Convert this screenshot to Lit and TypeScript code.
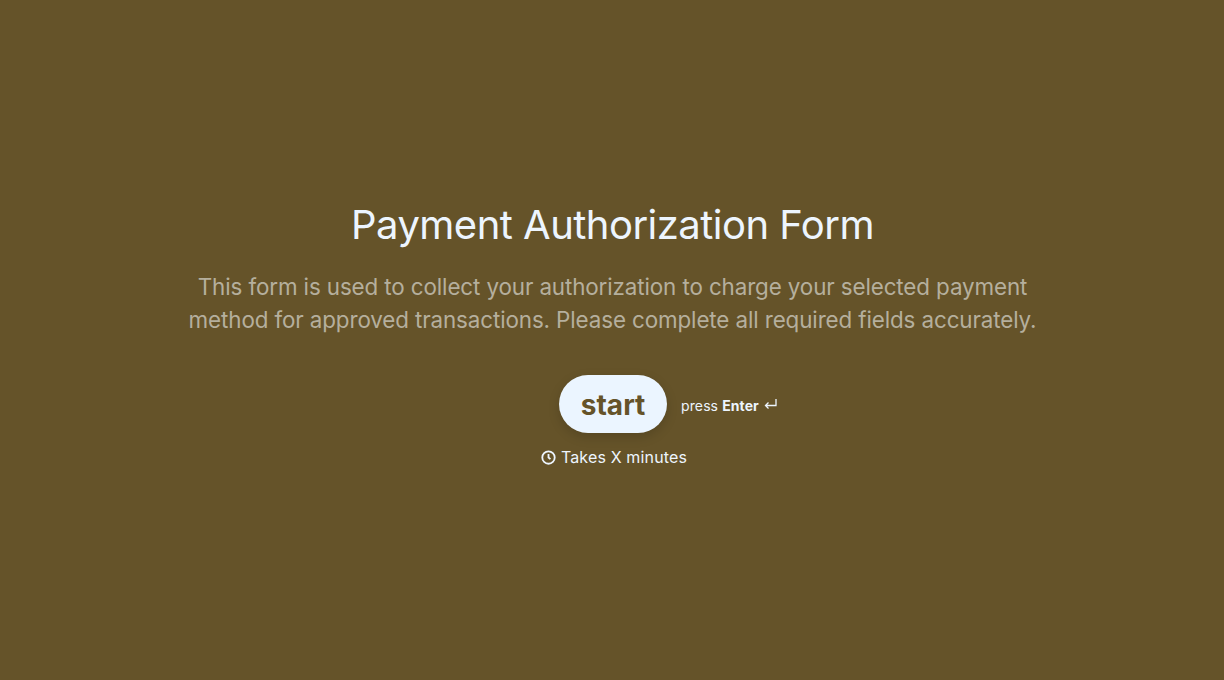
import { LitElement, html, css } from "lit";
import { customElement } from "lit/decorators.js";

@customElement("app-root")
export class AppRoot extends LitElement {
  static styles = css`
    :host { display: flex; flex-direction: column; align-items: center; width: 100%; height: 680px; background: #655329; font-family: Inter, sans-serif; color: #edf5fe; box-sizing: border-box; padding-top: 201px; }
    .title { margin: 0 0 0 1px; font-size: 40px; line-height: 48px; font-weight: 400; letter-spacing: -0.52px; }
    .desc { margin: 21px 0 0 1px; width: 880px; text-align: center; font-size: 22.4px; line-height: 33px; color: #b5af9d; font-weight: 400; letter-spacing: -0.115px; }
    .actions { display: flex; align-items: center; gap: 14px; margin-top: 39px; margin-left: 112px; }
    .start { border: none; width: 108px; height: 58px; padding: 2px 0 0; border-radius: 29px; background: #ebf5ff; color: #655329; font: 700 28px Inter, sans-serif; box-shadow: 0 4px 12px rgba(0,0,0,.15); }
    .press { display: flex; align-items: center; gap: 5px; padding-top: 2px; font: 14px Inter, sans-serif; letter-spacing: 0.1px; color: #edf5fe; }
    .press b { font-weight: 700; }
    .time { display: flex; align-items: center; gap: 5px; margin-top: 12px; margin-left: 4px; font-size: 16px; line-height: 24px; letter-spacing: 0.15px; color: #edf5fe; }
    svg { display: block; }
  `;
  render() {
    return html`
      <h1 class="title">Payment Authorization Form</h1>
      <p class="desc">This form is used to collect your authorization to charge your selected payment method for approved transactions. Please complete all required fields accurately.</p>
      <div class="actions">
        <button class="start">start</button>
        <span class="press"><span>press <b>Enter</b></span>
          <svg width="13" height="14" viewBox="0 0 13 14" fill="none" stroke="currentColor" stroke-width="1.3"><path d="M12 1v6.5H1.5M4.5 4.5l-3 3 3 3"/></svg>
        </span>
      </div>
      <div class="time">
        <svg width="15" height="15" viewBox="0 0 14 14" fill="none" stroke="currentColor" stroke-width="1.7"><circle cx="7" cy="7" r="5.8"/><path d="M7 3.8V7l1.8 1.5"/></svg>
        <span>Takes X minutes</span>
      </div>
    `;
  }
}
